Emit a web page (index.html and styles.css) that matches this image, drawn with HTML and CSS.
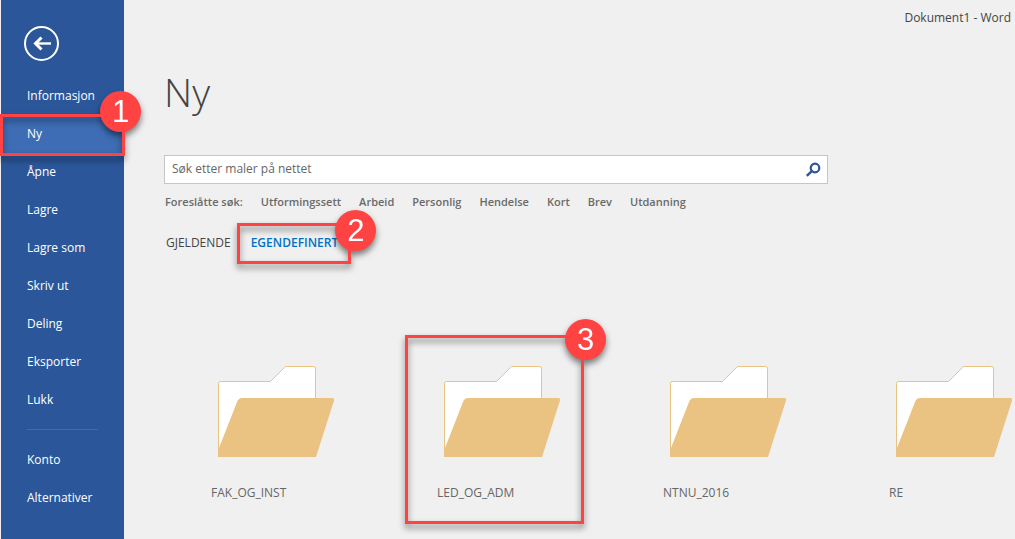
FILE: index.html
```html
<!DOCTYPE html>
<html lang="nb">
<head>
<meta charset="utf-8">
<title>Dokument1 - Word</title>
<link rel="stylesheet" href="styles.css">
</head>
<body>
<svg class="sprite" aria-hidden="true">
  <symbol id="folder" viewBox="0 0 117 92">
    <path d="M.5 90V17.500Q.5 15.500 2.500 15.500H52.500L67.500.5H95.500Q97.500.5 97.500 2.500V40" fill="#fff" stroke="#eac282"/>
    <path d="M0 91V84.500L19 36Q20.500 32 24 32H114.500Q116.500 32 116 34.500L98 91Z" fill="#eac282"/>
  </symbol>
</svg>
<div class="app">
  <aside class="sidebar">
    <button class="back" type="button" aria-label="Tilbake">
      <svg width="37" height="37" viewBox="0 0 37 37" fill="none" stroke="#fff">
        <circle cx="18.500" cy="18.500" r="16.500" stroke-width="2"/>
        <path d="M12 18.500H28" stroke-width="2.400"/>
        <path d="M18.500 12.500L12.500 18.500L18.500 24.500" stroke-width="3"/>
      </svg>
    </button>
    <nav>
      <ul class="menu">
        <li><a href="#">Informasjon</a></li>
        <li class="current"><a href="#" aria-current="page">Ny</a><span class="callout callout-menu"><b class="badge">1</b></span></li>
        <li><a href="#">Åpne</a></li>
        <li><a href="#">Lagre</a></li>
        <li><a href="#">Lagre som</a></li>
        <li><a href="#">Skriv ut</a></li>
        <li><a href="#">Deling</a></li>
        <li><a href="#">Eksporter</a></li>
        <li><a href="#">Lukk</a></li>
      </ul>
      <hr class="divider">
      <ul class="menu">
        <li><a href="#">Konto</a></li>
        <li><a href="#">Alternativer</a></li>
      </ul>
    </nav>
  </aside>
  <main class="main">
    <header class="titlebar">Dokument1 - Word</header>
    <h1 class="title">Ny</h1>
    <form class="search">
      <input class="search-input" type="text" aria-label="Søk etter maler på nettet" placeholder="Søk etter maler på nettet">
      <button class="search-button" type="button" aria-label="Søk">
        <svg width="16" height="16" viewBox="0 0 16 16" fill="none" stroke="#2b579a">
          <circle cx="10" cy="6" r="4.300" stroke-width="2.200"/>
          <path d="M6.800 9.200L1.800 13.900" stroke-width="2.400"/>
        </svg>
      </button>
    </form>
    <div class="suggestions">
      <span class="suggestions-label">Foreslåtte søk:</span>
      <a href="#">Utformingssett</a>
      <a href="#">Arbeid</a>
      <a href="#">Personlig</a>
      <a href="#">Hendelse</a>
      <a href="#">Kort</a>
      <a href="#">Brev</a>
      <a href="#">Utdanning</a>
    </div>
    <div class="tabs">
      <button class="tab" type="button">GJELDENDE</button>
      <button class="tab active" type="button">EGENDEFINERT<span class="callout callout-tab"><b class="badge">2</b></span></button>
    </div>
    <ul class="templates">
      <li><a class="template" href="#"><svg class="folder"><use href="#folder"/></svg>FAK_OG_INST</a></li>
      <li><a class="template" href="#"><svg class="folder"><use href="#folder"/></svg>LED_OG_ADM<span class="callout callout-template"><b class="badge">3</b></span></a></li>
      <li><a class="template" href="#"><svg class="folder"><use href="#folder"/></svg>NTNU_2016</a></li>
      <li><a class="template" href="#"><svg class="folder"><use href="#folder"/></svg>RE</a></li>
    </ul>
  </main>
</div>
</body>
</html>
```
FILE: styles.css
```css
* {
  box-sizing: border-box;
}

body {
  margin: 0;
  background: #f0f0f0;
  font: 12px/16px "Open Sans", "Noto Sans", sans-serif;
  color: #444;
}

a {
  color: inherit;
  text-decoration: none;
}

ul {
  margin: 0;
  padding: 0;
  list-style: none;
}

button {
  padding: 0;
  border: 0;
  background: none;
  font: inherit;
  color: inherit;
}

svg {
  display: block;
}

.sprite {
  position: absolute;
  width: 0;
  height: 0;
}

.app {
  display: flex;
  min-height: 100vh;
}

.sidebar {
  position: relative;
  z-index: 1;
  flex: none;
  width: 124px;
  padding-top: 25px;
  border-left: 1px solid #f0f0f0;
  background: #2b579a;
  color: #fff;
}

.back {
  display: block;
  margin: 0 0 15px 22px;
}

.menu li {
  position: relative;
}

.menu a {
  display: block;
  padding: 11px 26px;
  white-space: nowrap;
}

.menu .current {
  background: #3e6db5;
}

.divider {
  height: 1px;
  margin: 10px 26px 11px;
  border: 0;
  background: #3e6db5;
}

.main {
  flex: 1;
  min-width: 0;
  padding-left: 40px;
  overflow: hidden;
}

.titlebar {
  padding: 10px 4px 0 0;
  text-align: right;
}

.title {
  margin: 39px 0 36px;
  font-size: 39px;
  line-height: 54px;
  font-weight: 300;
}

.search {
  display: flex;
  align-items: center;
  max-width: 664px;
  height: 29px;
  border: 1px solid #c6c6c6;
  background: #fff;
}

.search-input {
  flex: 1;
  min-width: 0;
  padding: 0 7px 2px;
  border: 0;
  outline: 0;
  background: none;
  font: inherit;
}

.search-input::placeholder {
  color: #666;
  opacity: 1;
}

.search-button {
  margin-right: 6px;
}

.suggestions {
  display: flex;
  gap: 18px;
  margin-top: 10px;
  padding-left: 1px;
  font-size: 11px;
  font-weight: 600;
  color: #6a6a6a;
  white-space: nowrap;
}

.tabs {
  display: flex;
  gap: 20px;
  margin-top: 25px;
  padding-left: 2px;
}

.tab {
  position: relative;
}

.tab.active {
  font-weight: 600;
  color: #0072c6;
}

.templates {
  display: grid;
  grid-template-columns: repeat(4, 176px);
  gap: 50px;
  margin: 86px 0 0 17px;
}

.template {
  position: relative;
  display: block;
  padding: 29px 0 20px 30px;
  color: #666;
}

.folder {
  width: 117px;
  height: 92px;
  margin: 0 0 27px 7px;
}

.callout {
  position: absolute;
  border: 3px solid #ff4343;
  filter: drop-shadow(0 4px 3px rgba(0, 0, 0, 0.5));
  pointer-events: none;
}

.callout-menu {
  inset: -1px -1px -3px;
}

.callout-tab {
  inset: -12px -13px -13px -14px;
}

.callout-template {
  inset: -2px -1px -3px -2px;
}

.badge {
  position: absolute;
  top: -19px;
  right: -25px;
  width: 41px;
  height: 41px;
  border-radius: 50%;
  background: #ff4343;
  font: 31px/41px "Liberation Sans", Arial, sans-serif;
  color: #fff;
  text-align: center;
}

.callout-menu .badge {
  top: -26px;
  right: -19px;
}

.callout-tab .badge {
  top: -16px;
  right: -28px;
}
```
